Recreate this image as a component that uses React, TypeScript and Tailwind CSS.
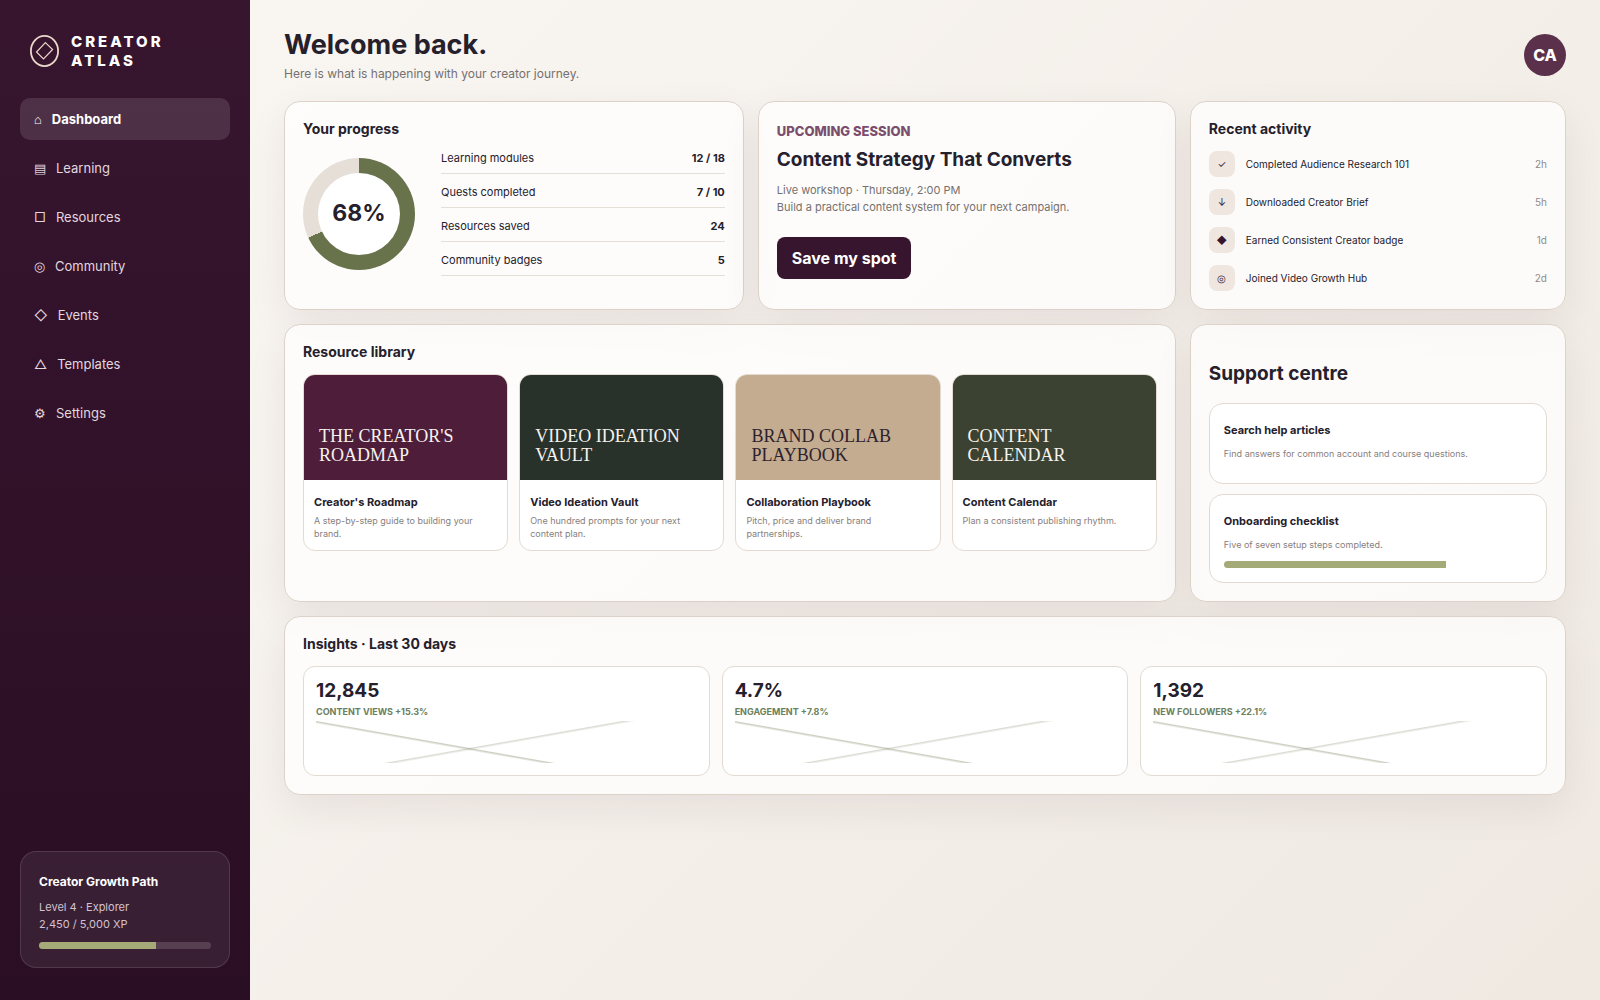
import type { ReactNode } from 'react';

const navItems = [
  { icon: '⌂', label: 'Dashboard', active: true },
  { icon: '▤', label: 'Learning' },
  { icon: '□', label: 'Resources' },
  { icon: '◎', label: 'Community' },
  { icon: '◇', label: 'Events' },
  { icon: '△', label: 'Templates' },
  { icon: '⚙', label: 'Settings' },
];

const progress = [
  { label: 'Learning modules', value: '12 / 18' },
  { label: 'Quests completed', value: '7 / 10' },
  { label: 'Resources saved', value: '24' },
  { label: 'Community badges', value: '5' },
];

const activity = [
  { icon: '✓', label: 'Completed Audience Research 101', time: '2h' },
  { icon: '↓', label: 'Downloaded Creator Brief', time: '5h' },
  { icon: '◆', label: 'Earned Consistent Creator badge', time: '1d' },
  { icon: '◎', label: 'Joined Video Growth Hub', time: '2d' },
];

const resources = [
  {
    cover: "THE CREATOR'S ROADMAP",
    title: "Creator's Roadmap",
    text: 'A step-by-step guide to building your brand.',
    color: 'bg-[#4d1d3a] text-[#f7f2ec]',
  },
  {
    cover: 'VIDEO IDEATION VAULT',
    title: 'Video Ideation Vault',
    text: 'One hundred prompts for your next content plan.',
    color: 'bg-[#28312a] text-[#f7f2ec]',
  },
  {
    cover: 'BRAND COLLAB PLAYBOOK',
    title: 'Collaboration Playbook',
    text: 'Pitch, price and deliver brand partnerships.',
    color: 'bg-[#c3ac8f] text-[#2e2230]',
  },
  {
    cover: 'CONTENT CALENDAR',
    title: 'Content Calendar',
    text: 'Plan a consistent publishing rhythm.',
    color: 'bg-[#3b4232] text-[#f7f2ec]',
  },
];

const insights = [
  { value: '12,845', label: 'CONTENT VIEWS +15.3%' },
  { value: '4.7%', label: 'ENGAGEMENT +7.8%' },
  { value: '1,392', label: 'NEW FOLLOWERS +22.1%' },
];

function Card({ className = '', children }: { className?: string; children: ReactNode }) {
  return (
    <section
      className={`rounded-2xl border border-[#ddd2c8] bg-white/75 p-[18px] shadow-[0_14px_40px_rgba(55,21,47,0.07)] ${className}`}
    >
      {children}
    </section>
  );
}

function CardTitle({ children }: { children: ReactNode }) {
  return <h2 className="mb-3.5 text-sm leading-[17px] font-bold">{children}</h2>;
}

function Meter({ value, label }: { value: number; label: string }) {
  return (
    <div
      role="progressbar"
      aria-label={label}
      aria-valuenow={value}
      className="h-[7px] overflow-hidden rounded-full bg-white/15"
    >
      <div className="h-full bg-[#a5ab78]" style={{ width: `${value}%` }} />
    </div>
  );
}

function Logo() {
  return (
    <svg width="29" height="32" viewBox="0 0 29 32" fill="none" stroke="#ead8c8" className="shrink-0">
      <ellipse cx="14.5" cy="16" rx="13.6" ry="15.1" strokeWidth="1.8" />
      <path d="M15.4 7.6 L22.6 14.5 L13.5 24 L6.5 17 Z" strokeWidth="1.2" />
    </svg>
  );
}

function Sidebar() {
  return (
    <aside className="flex w-[250px] shrink-0 flex-col bg-linear-to-b from-[#37152f] to-[#2a0e23] px-5 pt-8 pb-8 text-white">
      <div className="flex items-center gap-3 px-2.5">
        <Logo />
        <p className="text-[15px] leading-[19px] font-extrabold tracking-[3px]">CREATOR ATLAS</p>
      </div>

      <nav className="mt-7 flex flex-col gap-[7px]">
        {navItems.map((item) => (
          <a
            key={item.label}
            href="#"
            className={`flex h-[42px] items-center gap-2.5 rounded-[10px] px-3.5 pt-0.5 text-[13px] ${
              item.active ? 'bg-white/12 font-bold text-white' : 'text-[#e2d6df]'
            }`}
          >
            <span className="font-normal">{item.icon}</span>
            {item.label}
          </a>
        ))}
      </nav>

      <div className="mt-auto rounded-2xl border border-white/12 bg-white/7 p-[18px]">
        <h2 className="pt-1 text-xs leading-[15px] font-bold">Creator Growth Path</h2>
        <p className="mt-2.5 mb-[9px] text-[11px] leading-[17px] text-[#d3c2cf]">
          Level 4 · Explorer
          <br />
          2,450 / 5,000 XP
        </p>
        <Meter value={68} label="Creator Growth Path" />
      </div>
    </aside>
  );
}

export default function App() {
  return (
    <div className="flex min-h-screen bg-linear-135 from-[#faf7f3] to-[#efe9e2] font-['Inter',sans-serif] text-[#25202b]">
      <Sidebar />

      <main className="min-w-0 flex-1 px-[34px] pt-7">
        <header className="mb-5 flex items-center justify-between">
          <div>
            <h1 className="text-[27px] leading-[34px] font-bold">Welcome back.</h1>
            <p className="mt-1 text-xs leading-[15px] text-[#76706f]">
              Here is what is happening with your creator journey.
            </p>
          </div>
          <div className="grid size-[42px] place-items-center rounded-full bg-[#5b304b] font-extrabold text-white">
            CA
          </div>
        </header>

        <div className="grid grid-cols-[1.1fr_1fr_0.9fr] gap-3.5">
          <Card>
            <CardTitle>Your progress</CardTitle>
            <div className="flex items-center gap-[26px]">
              <div className="grid size-28 shrink-0 place-items-center rounded-full bg-[conic-gradient(#68724b_68%,#e6dfd8_0)]">
                <div className="grid size-[82px] place-items-center rounded-full bg-white text-[23px] font-bold">
                  68%
                </div>
              </div>
              <dl className="flex flex-1 flex-col gap-[11px] text-[11px] leading-[14px]">
                {progress.map((row) => (
                  <div key={row.label} className="flex justify-between border-b border-[#e6dfd8] pb-2">
                    <dt>{row.label}</dt>
                    <dd className="font-bold">{row.value}</dd>
                  </div>
                ))}
              </dl>
            </div>
          </Card>

          <Card>
            <p className="mt-[3px] text-[13px] leading-4 font-extrabold text-[#7b4e6c]">UPCOMING SESSION</p>
            <h2 className="mt-[9px] text-[19px] leading-6 font-bold">Content Strategy That Converts</h2>
            <p className="mt-2.5 text-[11px] leading-[17px] text-[#76706f]">
              Live workshop · Thursday, 2:00 PM
              <br />
              Build a practical content system for your next campaign.
            </p>
            <button className="mt-[21px] h-[42px] rounded-lg bg-[#37152f] px-[15px] font-bold text-white">
              Save my spot
            </button>
          </Card>

          <Card>
            <CardTitle>Recent activity</CardTitle>
            <ul className="flex flex-col gap-3 text-[10px]">
              {activity.map((item) => (
                <li key={item.label} className="flex items-center gap-[11px]">
                  <span className="grid size-[26px] place-items-center rounded-lg bg-[#eee6df] text-[#37152f]">
                    {item.icon}
                  </span>
                  <span>{item.label}</span>
                  <time className="ml-auto text-[#8f8b89]">{item.time}</time>
                </li>
              ))}
            </ul>
          </Card>

          <Card className="col-span-2">
            <CardTitle>Resource library</CardTitle>
            <div className="grid grid-cols-4 gap-[11px]">
              {resources.map((item) => (
                <article key={item.title} className="overflow-hidden rounded-xl border border-[#e3dad1] bg-white">
                  <div
                    className={`flex h-[105px] items-end p-[15px] font-['Liberation_Serif',serif] text-lg leading-[19px] ${item.color}`}
                  >
                    {item.cover}
                  </div>
                  <div className="px-2.5 pt-[15px] pb-2.5">
                    <h3 className="text-[11px] leading-[14px] font-bold">{item.title}</h3>
                    <p className="mt-[5px] text-[9px] leading-[13px] text-[#878080]">{item.text}</p>
                  </div>
                </article>
              ))}
            </div>
          </Card>

          <Card>
            <h2 className="mt-[19px] mb-[17px] text-[19px] leading-6 font-bold">Support centre</h2>
            <div className="flex flex-col gap-2.5">
              <article className="rounded-[14px] border border-[#e3dad1] bg-white px-3.5 pt-[19px] pb-[23px]">
                <h3 className="text-[11px] leading-[14px] font-bold">Search help articles</h3>
                <p className="mt-2.5 text-[9px] leading-[13px] text-[#878080]">
                  Find answers for common account and course questions.
                </p>
              </article>
              <article className="rounded-[14px] border border-[#e3dad1] bg-white px-3.5 pt-[19px] pb-3.5">
                <h3 className="text-[11px] leading-[14px] font-bold">Onboarding checklist</h3>
                <p className="my-2.5 text-[9px] leading-[13px] text-[#878080]">
                  Five of seven setup steps completed.
                </p>
                <Meter value={72} label="Onboarding checklist" />
              </article>
            </div>
          </Card>

          <Card className="col-span-3">
            <CardTitle>Insights · Last 30 days</CardTitle>
            <div className="grid grid-cols-3 gap-3">
              {insights.map((item) => (
                <article key={item.label} className="rounded-xl border border-[#e3dad1] bg-white p-3">
                  <p className="text-[19px] leading-6 font-bold">{item.value}</p>
                  <p className="mt-0.5 text-[9px] leading-[13px] font-bold text-[#6b8060]">{item.label}</p>
                  <div className="mt-[3px] h-[42px] bg-[linear-gradient(10deg,transparent_36%,#68724b59_38%,transparent_39%),linear-gradient(170deg,transparent_49%,#68724b40_50%,transparent_52%)]" />
                </article>
              ))}
            </div>
          </Card>
        </div>
      </main>
    </div>
  );
}
